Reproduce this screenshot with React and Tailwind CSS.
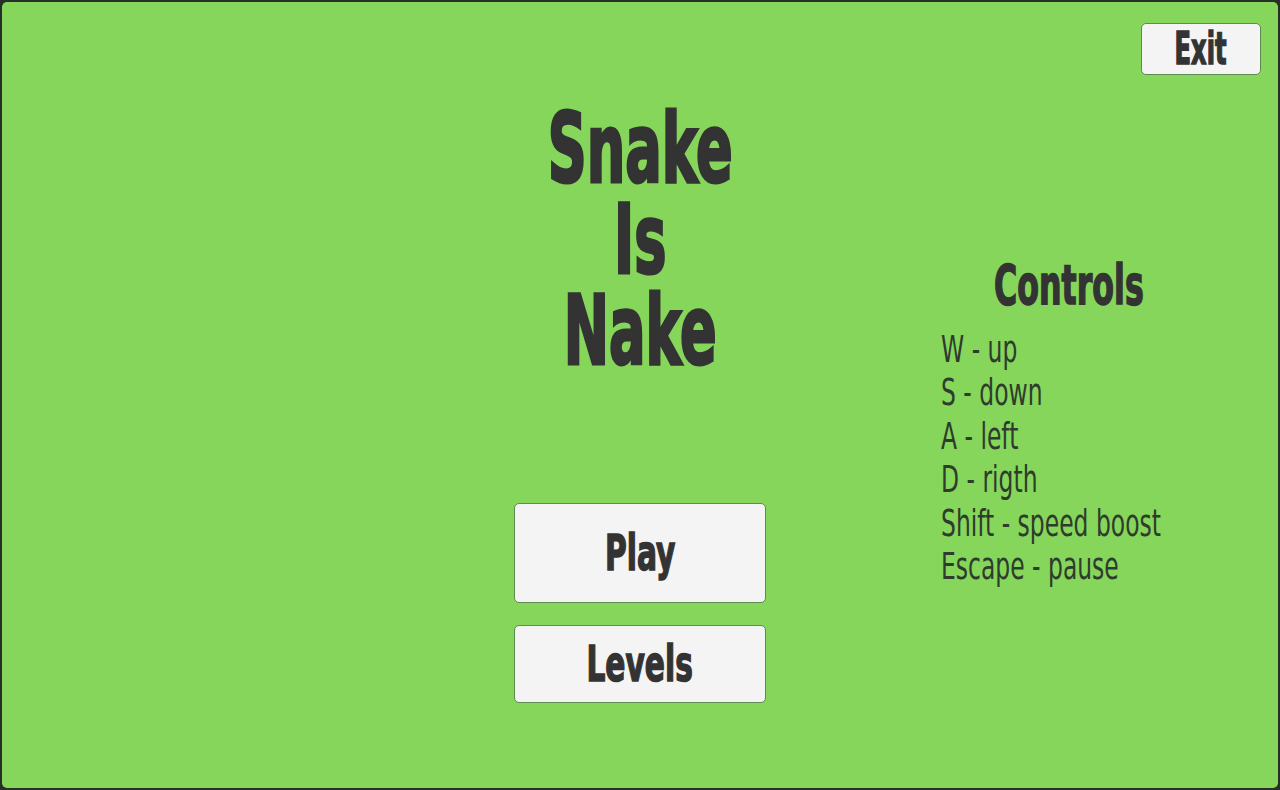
export default function App() {
  const font = { fontFamily: '"DejaVu Sans", "Liberation Sans", sans-serif' };
  return (
    <div className="w-[1280px] h-[790px] bg-[#263026] p-[2px]" style={font}>
      <div className="h-full w-full rounded-[5px] bg-[#85d65a] flex flex-col">
        <div className="flex justify-end pt-[21px] pr-[17px]">
          <button className="w-[120px] h-[52px] rounded-[5px] border border-[#5d8a4e] bg-[#f4f4f4] flex items-center justify-center text-[#333333] font-bold font-stretch-condensed text-[44px] leading-none [-webkit-text-stroke:1.5px_#333333]">
            <span className="inline-block scale-x-[0.61]">Exit</span>
          </button>
        </div>
        <div className="grid grid-cols-[1fr_252px_1fr]">
          <div />
          <div className="flex flex-col items-center">
            <div className="flex flex-col items-center text-[#333333] font-bold font-stretch-condensed text-[97px] leading-[91px] mt-[28px] [-webkit-text-stroke:3px_#333333]">
              <span className="inline-block scale-x-[0.62]">Snake</span>
              <span className="inline-block scale-x-[0.62]">Is</span>
              <span className="inline-block scale-x-[0.62]">Nake</span>
            </div>
            <button className="mt-[127px] w-[252px] h-[100px] rounded-[5px] border border-[#5d8a4e] bg-[#f4f4f4] flex items-center justify-center text-[#333333] font-bold font-stretch-condensed text-[50px] leading-none [-webkit-text-stroke:1.5px_#333333]">
              <span className="inline-block scale-x-[0.66]">Play</span>
            </button>
            <button className="mt-[22px] w-[252px] h-[78px] rounded-[5px] border border-[#5d8a4e] bg-[#f4f4f4] flex items-center justify-center text-[#333333] font-bold font-stretch-condensed text-[50px] leading-none [-webkit-text-stroke:1.5px_#333333]">
              <span className="inline-block scale-x-[0.66]">Levels</span>
            </button>
          </div>
          <div className="pl-[175px] pt-[180px] flex flex-col">
            <div className="ml-[53px] text-[#333333] font-bold font-stretch-condensed text-[55px] leading-[60px] [-webkit-text-stroke:1.5px_#333333]">
              <span className="inline-block origin-left scale-x-[0.64]">Controls</span>
            </div>
            <div className="mt-[13px] flex flex-col text-[#2f3b2c] font-stretch-condensed text-[38px] leading-[43.4px]">
              {["W - up", "S - down", "A - left", "D - rigth", "Shift - speed boost", "Escape - pause"].map((t) => (
                <span key={t} className="inline-block origin-left scale-x-[0.686] whitespace-nowrap">{t}</span>
              ))}
            </div>
          </div>
        </div>
      </div>
    </div>
  );
}
